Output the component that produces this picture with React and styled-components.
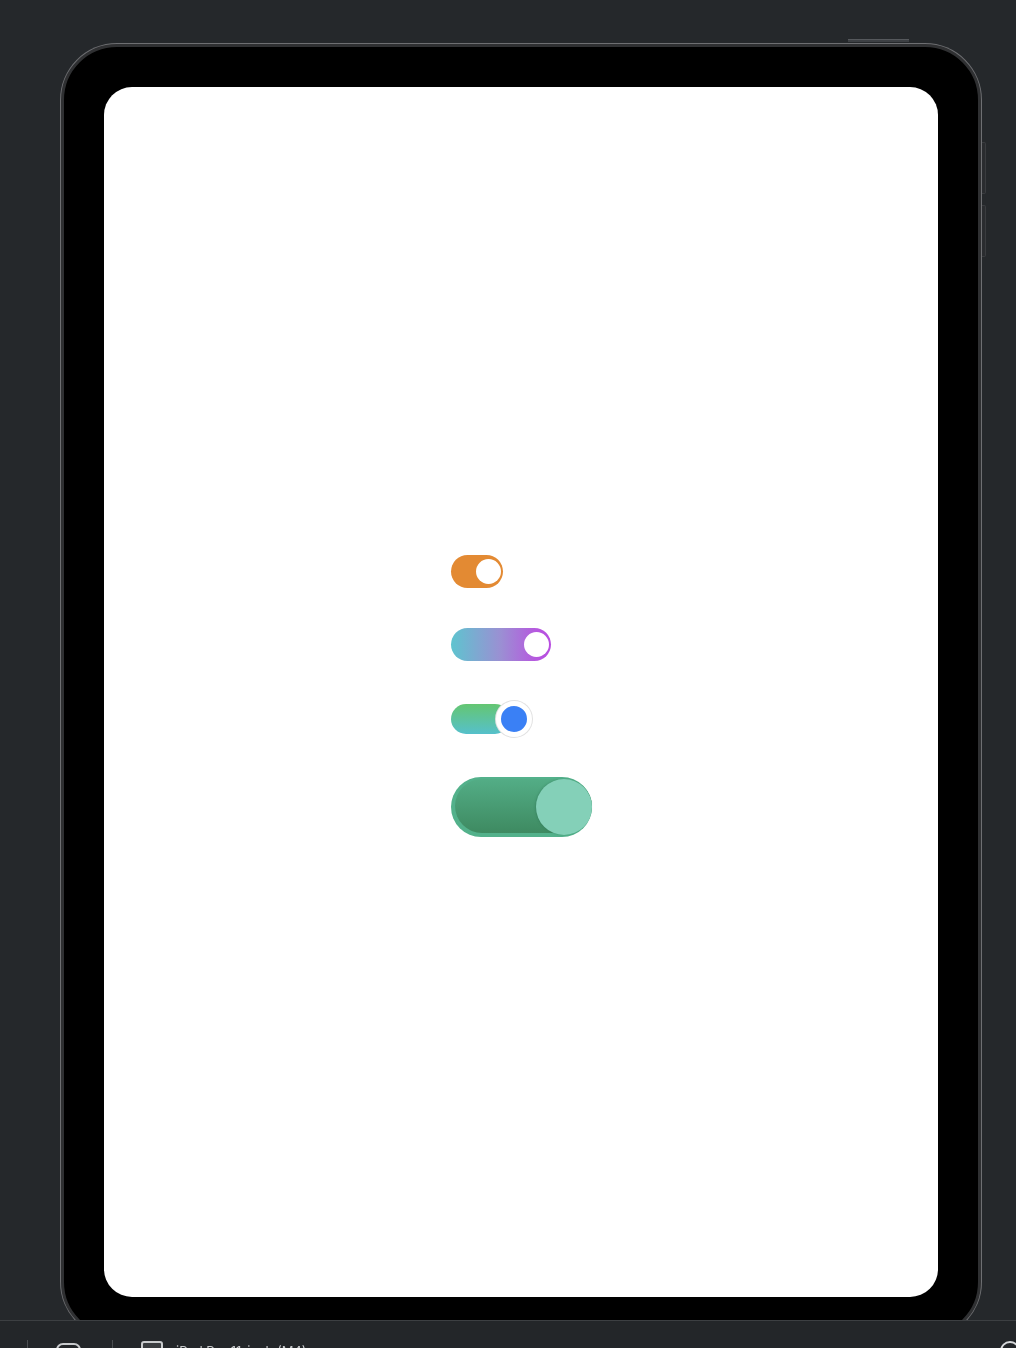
import React from 'react';
import styled, { createGlobalStyle } from 'styled-components';

const GlobalStyle = createGlobalStyle`
  html, body {
    margin: 0;
    padding: 0;
    background: #25282b;
    font-family: "Inter", "Liberation Sans", sans-serif;
  }
  body {
    height: 1348px;
    overflow: hidden;
  }
`;

const Page = styled.div`
  display: flex;
  flex-direction: column;
  height: 1348px;
`;

const Stage = styled.div`
  position: relative;
  height: 1320px;
  overflow: hidden;
  padding: 44px 0 0 61px;
  box-sizing: border-box;
`;

const TopButton = styled.div`
  position: absolute;
  top: 39px;
  left: 848px;
  width: 61px;
  height: 2px;
  background: #3d4044;
  border-top: 1px solid #55585c;
`;

const Device = styled.div`
  position: relative;
  width: 920px;
  box-sizing: border-box;
  padding: 40px 40px 38px;
  background: #000;
  border: 3px solid #2f3032;
  border-radius: 56px;
  box-shadow: 0 0 0 1px #6e6f72;
`;

const SideButton = styled.div`
  position: absolute;
  right: -8px;
  top: ${({ top }) => top}px;
  width: 3px;
  height: 50px;
  background: #2a2c2f;
  border: 1px solid #3a3c3f;
  border-left: none;
  border-radius: 0 2px 2px 0;
`;

const Screen = styled.div`
  width: 834px;
  height: 1210px;
  background: #fff;
  border-radius: 28px;
  display: flex;
  align-items: center;
  justify-content: center;
`;

const Column = styled.div`
  width: 141px;
  display: flex;
  flex-direction: column;
  align-items: flex-start;
  gap: 40px;
  margin-top: 7px;
`;

const SmallTrack = styled.div`
  width: ${({ w }) => w}px;
  height: 33px;
  box-sizing: border-box;
  padding: 4px 2px;
  border-radius: 17px;
  background: ${({ bg }) => bg};
  display: flex;
  justify-content: flex-end;
  align-items: center;
`;

const WhiteThumb = styled.div`
  width: 25px;
  height: 25px;
  border-radius: 50%;
  background: #fff;
`;

const RingRow = styled.div`
  display: flex;
  align-items: center;
`;

const RingTrack = styled.div`
  width: 59px;
  height: 30px;
  border-radius: 15px;
  background: linear-gradient(180deg, #64c672 0%, #56c0cb 100%);
`;

const RingThumb = styled.div`
  width: 26px;
  height: 26px;
  margin-left: -14px;
  border-radius: 50%;
  background: #3a80f5;
  border: 5px solid #fff;
  box-shadow: 0 0 0 1px #e2e2e2;
`;

const BigTrack = styled.div`
  width: 141px;
  height: 60px;
  box-sizing: border-box;
  border-radius: 30px;
  background: #53b18b;
  padding: 2px 0 4px 4px;
  display: flex;
`;

const BigInner = styled.div`
  flex: 1;
  border-radius: 28px;
  background: linear-gradient(180deg, #53ad86 0%, #3e8a61 100%);
  display: flex;
  justify-content: flex-end;
  align-items: center;
`;

const BigThumb = styled.div`
  width: 56px;
  height: 56px;
  margin-top: 2px;
  border-radius: 50%;
  background: #84d0b8;
  box-shadow: -1px 0 2px rgba(40, 110, 80, 0.35);
`;

const Toolbar = styled.div`
  flex: 1;
  position: relative;
  background: #232629;
  border-top: 1px solid #3c3f42;
  display: flex;
  align-items: flex-start;
  padding-top: 19px;
  box-sizing: border-box;
  overflow: hidden;
`;

const Divider = styled.div`
  width: 1px;
  height: 20px;
  background: #4a4d50;
  margin-left: ${({ ml }) => ml}px;
`;

const ToolIcon = styled.div`
  width: ${({ w }) => w}px;
  height: 18px;
  margin-left: ${({ ml }) => ml}px;
  margin-top: ${({ mt }) => mt}px;
  box-sizing: border-box;
  border: 2px solid #c9cbcd;
  border-radius: ${({ r }) => r}px;
  background: ${({ fill }) => fill || 'transparent'};
`;

const DeviceName = styled.div`
  margin-left: 13px;
  margin-top: 3px;
  font-size: 13px;
  color: #c7c9cb;
  white-space: nowrap;
  filter: blur(0.6px);
`;

const Spacer = styled.div`
  flex: 1;
`;

const RoundIcon = styled.div`
  width: 20px;
  height: 20px;
  margin-top: 1px;
  margin-right: -4px;
  box-sizing: border-box;
  border: 2px solid #d6d8da;
  border-radius: 50%;
`;

export default function App() {
  return (
    <Page>
      <GlobalStyle />
      <Stage>
        <TopButton />
        <Device>
          <SideButton top={95} />
          <SideButton top={158} />
          <Screen>
            <Column>
              <SmallTrack w={52} bg="#e38a33">
                <WhiteThumb />
              </SmallTrack>
              <SmallTrack
                w={100}
                bg="linear-gradient(90deg, #5ec4cf 0%, #9b8fd3 50%, #b658df 85%, #b84de0 100%)"
              >
                <WhiteThumb />
              </SmallTrack>
              <RingRow>
                <RingTrack />
                <RingThumb />
              </RingRow>
              <BigTrack>
                <BigInner>
                  <BigThumb />
                </BigInner>
              </BigTrack>
            </Column>
          </Screen>
        </Device>
      </Stage>
      <Toolbar>
        <Divider ml={27} />
        <ToolIcon w={25} ml={28} mt={3} r={7} />
        <Divider ml={31} />
        <ToolIcon w={22} ml={28} mt={1} r={3} fill="#3a3d40" />
        <DeviceName>iPad Pro 11-inch (M4)</DeviceName>
        <Spacer />
        <RoundIcon />
      </Toolbar>
    </Page>
  );
}
